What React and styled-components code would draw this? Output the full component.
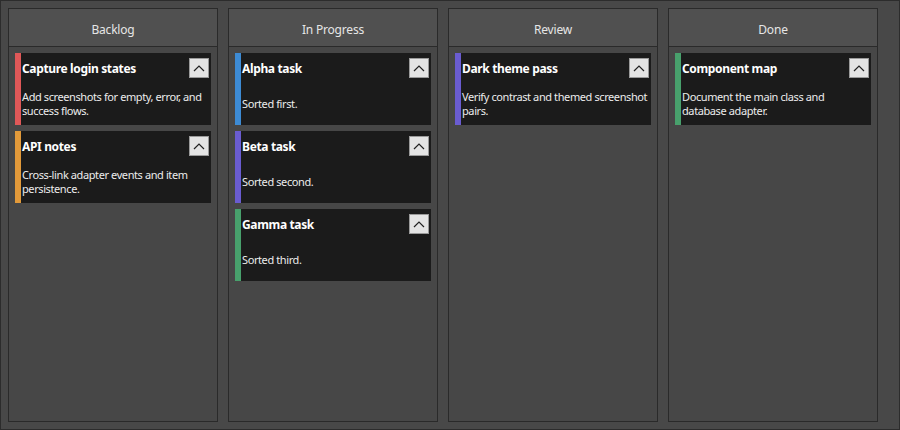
import React from "react";
import styled, { createGlobalStyle } from "styled-components";

const GlobalStyle = createGlobalStyle`
  html, body {
    margin: 0;
    padding: 0;
    background: #484848;
  }
  * {
    box-sizing: border-box;
  }
`;

const columns = [
  {
    title: "Backlog",
    cards: [
      { title: "Capture login states", text: "Add screenshots for empty, error, and success flows.", color: "#e05858" },
      { title: "API notes", text: "Cross-link adapter events and item persistence.", color: "#e29a3a" },
    ],
  },
  {
    title: "In Progress",
    cards: [
      { title: "Alpha task", text: "Sorted first.", color: "#3d8bd4" },
      { title: "Beta task", text: "Sorted second.", color: "#6a5cd0" },
      { title: "Gamma task", text: "Sorted third.", color: "#48a06c" },
    ],
  },
  {
    title: "Review",
    cards: [
      { title: "Dark theme pass", text: "Verify contrast and themed screenshot pairs.", color: "#6a5cd0" },
    ],
  },
  {
    title: "Done",
    cards: [
      { title: "Component map", text: "Document the main class and database adapter.", color: "#48a06c" },
    ],
  },
];

function App() {
  return (
    <>
      <GlobalStyle />
      <Board>
        {columns.map((col) => (
          <Column key={col.title}>
            <Header>{col.title}</Header>
            <CardList>
              {col.cards.map((card) => (
                <Card key={card.title} $accent={card.color}>
                  <TitleRow>
                    <Title>{card.title}</Title>
                    <CollapseButton>
                      <svg width="12" height="8" viewBox="0 0 12 8">
                        <polyline points="1,7 6,2 11,7" fill="none" stroke="#222" strokeWidth="1.2" />
                      </svg>
                    </CollapseButton>
                  </TitleRow>
                  <Description>{card.text}</Description>
                </Card>
              ))}
            </CardList>
          </Column>
        ))}
      </Board>
    </>
  );
}

const Board = styled.div`
  width: 900px;
  height: 430px;
  border: 1px solid #2c2c2c;
  padding: 7px;
  display: flex;
  gap: 10px;
  background: #484848;
  font-family: "Noto Sans", "Open Sans", sans-serif;
`;

const Column = styled.div`
  width: 210px;
  height: 414px;
  border: 1px solid #2a2a2a;
  background: #474747;
  display: flex;
  flex-direction: column;
`;

const Header = styled.div`
  height: 38px;
  padding-top: 3px;
  border-bottom: 1px solid #2a2a2a;
  background: #505050;
  color: #e6e6e6;
  font-size: 12px;
  letter-spacing: -0.2px;
  display: flex;
  align-items: center;
  justify-content: center;
`;

const CardList = styled.div`
  padding: 6px 6px;
  display: flex;
  flex-direction: column;
  gap: 6px;
`;

const Card = styled.div`
  height: 72px;
  background: #1b1b1b;
  border-left: 6px solid ${(p) => p.$accent};
  padding: 5px 0 0 1px;
  display: flex;
  flex-direction: column;
`;

const TitleRow = styled.div`
  display: flex;
  align-items: center;
  justify-content: space-between;
  height: 20px;
  padding-right: 2px;
`;

const Title = styled.div`
  color: #ffffff;
  font-weight: 700;
  font-size: 12px;
  letter-spacing: -0.35px;
  padding-top: 1px;
`;

const CollapseButton = styled.button`
  width: 20px;
  height: 20px;
  padding: 0;
  border: 1px solid #9a9a9a;
  background: #e4e4e4;
  display: flex;
  align-items: center;
  justify-content: center;
`;

const Description = styled.div`
  flex: 1;
  display: flex;
  align-items: center;
  color: #ececec;
  font-size: 11px;
  letter-spacing: -0.4px;
  line-height: 14px;
  padding-top: 4px;
`;

export default App;
